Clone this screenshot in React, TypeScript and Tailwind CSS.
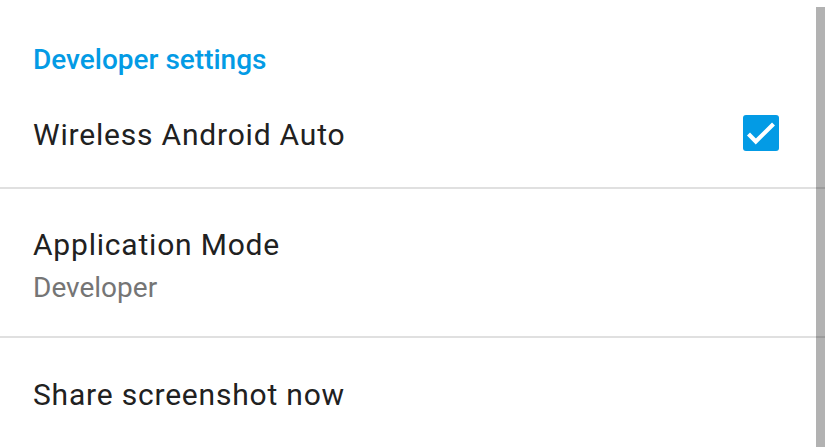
import React, { useState } from "react";

// One row in the settings list
function Row({
  title,
  summary,
  checked,
  onToggle,
  last,
}: {
  title: string;
  summary?: string;
  checked?: boolean;
  onToggle?: () => void;
  last?: boolean;
}) {
  return (
    <div
      className={`flex items-center justify-between pl-[33px] pr-[46px] ${
        last ? "" : "border-b-2 border-[#e0e0e0]"
      } ${summary ? "h-[149px] pt-[7px]" : "h-[110px] pt-[4px]"}`}
      onClick={onToggle}
    >
      <div className="flex flex-col">
        <span className="text-[30px] leading-[36px] tracking-[0.8px] text-[#212121]">
          {title}
        </span>
        {summary && (
          <span className="text-[28px] leading-[34px] mt-[8px] text-[#757575]">
            {summary}
          </span>
        )}
      </div>
      {checked !== undefined && (
        <div
          className={`w-[36px] h-[36px] -mt-[4px] rounded-[3px] flex items-center justify-center ${
            checked ? "bg-[#039be5]" : "border-[3px] border-[#757575]"
          }`}
        >
          {checked && (
            <svg width="36" height="36" viewBox="0 0 36 36">
              <path
                d="M5.5 19 L12.8 26.5 L30.5 9"
                fill="none"
                stroke="white"
                strokeWidth="4.2"
              />
            </svg>
          )}
        </div>
      )}
    </div>
  );
}

export default function App() {
  const [wireless, setWireless] = useState(true);

  return (
    <div
      className="relative w-[825px] h-[447px] overflow-hidden bg-white"
      style={{ fontFamily: "Roboto, 'Noto Sans', sans-serif" }}
    >
      {/* Category header */}
      <div className="h-[79px] pl-[33px] pt-[43px]">
        <span className="block text-[28px] leading-[34px] font-medium text-[#039be5]">
          Developer settings
        </span>
      </div>

      <Row
        title="Wireless Android Auto"
        checked={wireless}
        onToggle={() => setWireless(!wireless)}
      />
      <Row title="Application Mode" summary="Developer" />
      <Row title="Share screenshot now" last />

      {/* Scrollbar */}
      <div className="absolute right-0 top-[7px] bottom-0 w-[9px] bg-black/30" />
    </div>
  );
}
